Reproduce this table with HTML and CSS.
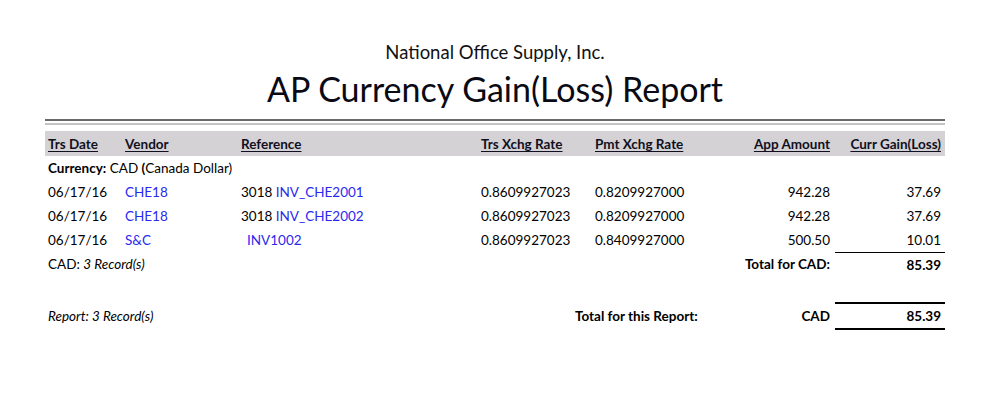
FILE: index.html
```html
<!DOCTYPE html>
<html>
<head>
<meta charset="utf-8">
<link rel="stylesheet" href="styles.css">
</head>
<body>
<div class="report">
  <header class="head">
    <div class="company">National Office Supply, Inc.</div>
    <h1 class="title">AP Currency Gain(Loss) Report</h1>
  </header>
  <div class="rule"></div>
  <div class="row colhead">
    <span>Trs Date</span>
    <span>Vendor</span>
    <span>Reference</span>
    <span>Trs Xchg Rate</span>
    <span>Pmt Xchg Rate</span>
    <span class="r c6">App Amount</span>
    <span class="r c7">Curr Gain(Loss)</span>
  </div>
  <div class="row group"><span class="span-all"><b>Currency:</b> CAD <b>(</b>Canada Dollar)</span></div>
  <div class="row data">
    <span>06/17/16</span>
    <span class="link">CHE18</span>
    <span>3018 <span class="link">INV_CHE2001</span></span>
    <span>0.8609927023</span>
    <span>0.8209927000</span>
    <span class="r c6">942.28</span>
    <span class="r c7">37.69</span>
  </div>
  <div class="row data">
    <span>06/17/16</span>
    <span class="link">CHE18</span>
    <span>3018 <span class="link">INV_CHE2002</span></span>
    <span>0.8609927023</span>
    <span>0.8209927000</span>
    <span class="r c6">942.28</span>
    <span class="r c7">37.69</span>
  </div>
  <div class="row data">
    <span>06/17/16</span>
    <span class="link">S&amp;C</span>
    <span class="indent"><span class="link">INV1002</span></span>
    <span>0.8609927023</span>
    <span>0.8409927000</span>
    <span class="r c6">500.50</span>
    <span class="r c7">10.01</span>
  </div>
  <div class="row subtotal">
    <span class="span-3">CAD: <i>3 Record(s)</i></span>
    <span class="r c6"><b>Total for CAD:</b></span>
    <span class="r c7 topline"><b>85.39</b></span>
  </div>
  <div class="row grand">
    <span class="span-3"><i>Report: 3 Record(s)</i></span>
    <span class="gt-label"><b>Total for this Report:</b></span>
    <span class="r c6"><b>CAD</b></span>
    <span class="r c7 double"><b>85.39</b></span>
  </div>
</div>
</body>
</html>
```

FILE: styles.css
```css
html, body {
  margin: 0;
  padding: 0;
  background: #fff;
}
body {
  font-family: Lato, "Open Sans", sans-serif;
  color: #000;
  width: 998px;
  height: 394px;
  overflow: hidden;
}
.report {
  width: 900px;
  margin-left: 45px;
  padding-top: 40px;
}
.head {
  text-align: center;
}
.company {
  font-size: 18.5px;
  line-height: 24px;
  color: #111;
}
.title {
  margin: 3px 0 0;
  font-weight: 400;
  font-size: 34px;
  line-height: 44px;
  color: #0a0a14;
}
.rule {
  margin-top: 8px;
  height: 2px;
  border-top: 2px solid #6a6a6a;
  border-bottom: 2px solid #c4c4c4;
  background: #fff;
}
.row {
  display: grid;
  grid-template-columns: 77px 116px 240px 114px 125px 115px 110px;
  padding-left: 3px;
  font-size: 13.5px;
  align-items: center;
}
.row > span {
  white-space: nowrap;
}
.r { text-align: right; }
.c6 { padding-right: 5px; }
.c7 { padding-right: 4px; }
.colhead {
  margin-top: 6px;
  height: 25px;
  background: #d5d2d6;
  font-weight: 700;
  color: #101020;
}
.colhead > span {
  text-decoration: underline;
  text-underline-offset: 2px;
  padding-top: 1px;
}
.group {
  height: 24px;
}
.span-all { grid-column: 1 / -1; }
.data {
  height: 24px;
}
.link { color: #2a2aee; }
.indent { padding-left: 6px; }
.subtotal {
  height: 24px;
}
.span-3 { grid-column: 1 / 4; }
.subtotal .c6 { grid-column: 6; }
.topline {
  border-top: 1px solid #000;
  align-self: stretch;
  display: flex;
  align-items: center;
  justify-content: flex-end;
}
.grand {
  margin-top: 26px;
  height: 28px;
}
.gt-label {
  grid-column: 4 / 6;
  padding-left: 94px;
}
.double {
  border-top: 2px solid #000;
  border-bottom: 2px solid #000;
  align-self: stretch;
  display: flex;
  align-items: center;
  justify-content: flex-end;
}
```
